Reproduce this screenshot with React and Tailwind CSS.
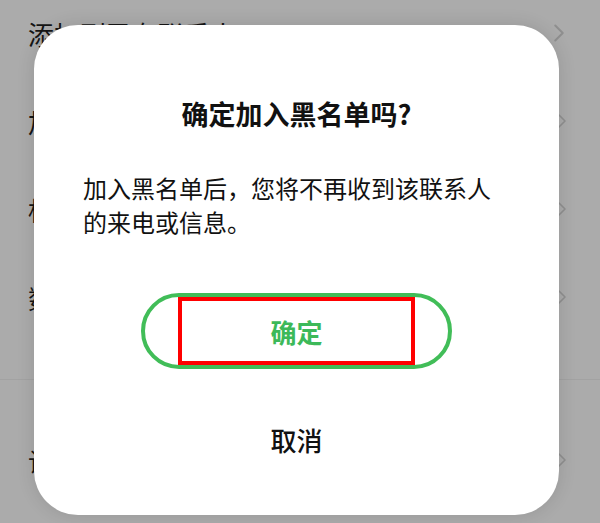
import { ChevronRight } from "lucide-react";

const rows = ["添加到已有联系人", "加入快速拨号", "标记号码", "数据备份"];

function Row({ label, arrowSize = 24 }) {
  return (
    <div className="flex h-[88px] items-center justify-between pl-[28px] pr-[26px]">
      <span className="text-[26px] text-[#151515]">{label}</span>
      <ChevronRight className="text-[#8f8f8f]" size={arrowSize} strokeWidth={1.6} />
    </div>
  );
}

function ConfirmDialog() {
  return (
    <div className="absolute left-[34px] top-[25px] flex h-[490px] w-[525px] flex-col items-center rounded-[44px] bg-white pt-[71px] shadow-[0_0_18px_rgba(0,0,0,0.12)]">
      <h2 className="text-[27px] font-semibold leading-[36px] text-[#111]">确定加入黑名单吗?</h2>
      <p className="mt-[39px] w-full px-[49px] text-[24px] leading-[34px] text-[#111]">
        加入黑名单后，您将不再收到该联系人的来电或信息。
      </p>
      <button className="mt-[54px] flex h-[76px] w-[311px] items-stretch justify-center rounded-full border-4 border-[#41bd58] bg-white">
        <span className="flex w-[237px] items-center justify-center border-4 border-[#ff0000] text-[26px] font-semibold text-[#3cb959]">
          确定
        </span>
      </button>
      <button className="mt-[53px] text-[26px] font-medium leading-[36px] text-[#111]">取消</button>
    </div>
  );
}

export default function App() {
  return (
    <div
      className="relative h-[523px] w-[600px] overflow-hidden bg-[#ababab]"
      style={{ fontFamily: '"Noto Sans CJK SC", "Noto Sans", sans-serif' }}
    >
      <div className="-mt-[11px] flex flex-col">
        {rows.map((r, i) => (
          <Row key={r} label={r} arrowSize={i === 0 ? 30 : 24} />
        ))}
        <div className="mt-[38px] h-px bg-[#a2a2a2]" />
        <div className="mt-[36px]">
          <Row label="设置铃声" />
        </div>
      </div>
      <ConfirmDialog />
    </div>
  );
}
